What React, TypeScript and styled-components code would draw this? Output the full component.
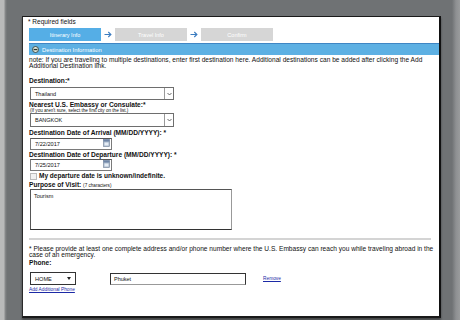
import React from 'react';
import styled, { createGlobalStyle } from 'styled-components';

const Global = createGlobalStyle`
  html, body { margin: 0; padding: 0; background: #6f7274; }
  body { font-family: "Liberation Sans", Arial, sans-serif; color: #111; }
`;

const Screen = styled.div`
  width: 460px;
  height: 320px;
  box-sizing: border-box;
  overflow: hidden;
  padding: 16px 0 0 22px;
  background: linear-gradient(
    to right,
    #b9baba 0,
    #b9baba 4px,
    #8a8c8d 5px,
    #6f7274 7px,
    #6f7274 452px,
    #8e9092 456px,
    #9a9c9d 460px
  );
`;

const Panel = styled.div`
  width: 419px;
  height: 302px;
  box-sizing: border-box;
  background: #fff;
  border-top: 1px solid #1a1a1a;
  border-left: 1px solid #2a2a2a;
  border-right: 2px solid #111;
  border-bottom: 2px solid #1a1a1a;
  padding: 0 0 0 6px;
  display: flex;
  flex-direction: column;
  box-shadow: 0 2px 2px rgba(0, 0, 0, 0.4);
`;

const Required = styled.div`
  font-size: 6.5px;
  line-height: 9px;
  height: 9px;
  margin-left: -1px;
`;

const Steps = styled.div`
  display: flex;
  align-items: center;
  margin-top: 2px;
  height: 13px;
`;

const Step = styled.div<{ $active?: boolean }>`
  width: 72px;
  height: 13px;
  display: flex;
  align-items: center;
  justify-content: center;
  background: ${(p) => (p.$active ? '#55aee6' : '#d6d6d6')};
  color: #fff;
  font-size: 5.5px;
`;

const ArrowBox = styled.div`
  width: 14px;
  display: flex;
  align-items: center;
  justify-content: center;
`;

const SectionBar = styled.div`
  margin-top: 2px;
  height: 12px;
  box-sizing: border-box;
  background: #5db0e3;
  border-top: 1px solid #3f86c4;
  display: flex;
  align-items: center;
  gap: 3px;
  padding-left: 3px;
  color: #fff;
  font-size: 5.8px;
`;

const Note = styled.div<{ $mt?: number; $size?: number; $pr?: number }>`
  margin-top: ${(p) => p.$mt ?? 0}px;
  font-size: ${(p) => p.$size ?? 6}px;
  line-height: 5.5px;
  padding-right: ${(p) => p.$pr ?? 0}px;
`;

const Label = styled.div<{ $mt?: number; $lh?: number }>`
  margin-top: ${(p) => p.$mt ?? 0}px;
  font-size: 6.6px;
  font-weight: bold;
  line-height: ${(p) => p.$lh ?? 8}px;
  height: ${(p) => p.$lh ?? 8}px;
  white-space: nowrap;
`;

const Small = styled.span`
  font-size: 4.6px;
  font-weight: normal;
`;

const Hint = styled.div`
  font-size: 4.6px;
  line-height: 5px;
  height: 5px;
  padding-left: 1px;
`;

const Select = styled.div<{ $mt?: number; $h: number }>`
  margin-top: ${(p) => p.$mt ?? 0}px;
  margin-left: 1px;
  width: 144px;
  height: ${(p) => p.$h}px;
  box-sizing: border-box;
  border: 1px solid #6e6e6e;
  display: flex;
  align-items: center;
  font-size: 5.5px;
`;

const SelectText = styled.div`
  flex: 1;
  padding-left: 4px;
`;

const SelectButton = styled.div`
  width: 8px;
  height: 100%;
  border-left: 1px solid #9a9a9a;
  display: flex;
  align-items: center;
  justify-content: center;
`;

const DateInput = styled.div<{ $mt?: number }>`
  margin-top: ${(p) => p.$mt ?? 0}px;
  margin-left: 1px;
  width: 82px;
  height: 12px;
  box-sizing: border-box;
  border: 1px solid #7a7a7a;
  border-top-color: #555;
  display: flex;
  align-items: center;
  justify-content: space-between;
  padding: 0 1px 0 4px;
  font-size: 5.6px;
`;

const CheckRow = styled.div`
  margin-top: 1px;
  height: 8px;
  display: flex;
  align-items: center;
  gap: 2px;
  font-size: 6.5px;
  font-weight: bold;
  line-height: 8px;
  padding-left: 1px;
`;

const Check = styled.div`
  width: 5px;
  height: 5px;
  border: 1px solid #bbb;
  background: #f2f2f2;
`;

const TextArea = styled.div`
  margin-left: 1px;
  width: 202px;
  height: 41px;
  box-sizing: border-box;
  border: 1px solid #555;
  border-right-color: #999;
  border-bottom-color: #333;
  padding: 3px 3px;
  font-size: 5.5px;
`;

const Divider = styled.div`
  margin-top: 8px;
  height: 2px;
  background: #d4d4d4;
  margin-right: 8px;
`;

const PhoneRow = styled.div`
  margin-top: 5.5px;
  height: 13px;
  display: flex;
  align-items: center;
  padding-left: 1px;
`;

const SmallSelect = styled.div`
  width: 46px;
  height: 13px;
  box-sizing: border-box;
  border: 1px solid #333;
  display: flex;
  align-items: center;
  justify-content: space-between;
  padding: 0 4px;
  font-size: 5.6px;
`;

const TextInput = styled.div`
  margin-left: 34px;
  width: 136px;
  height: 12px;
  box-sizing: border-box;
  border: 1px solid #333;
  border-bottom-color: #999;
  display: flex;
  align-items: center;
  padding-left: 3px;
  font-size: 5.5px;
`;

const Link = styled.a<{ $ml?: number; $mt?: number }>`
  margin-left: ${(p) => p.$ml ?? 0}px;
  margin-top: ${(p) => p.$mt ?? 0}px;
  color: #1c2aa6;
  text-decoration: underline;
  font-size: 4.8px;
  line-height: 6px;
  cursor: pointer;
`;

const Arrow = () => (
  <svg width="8" height="7" viewBox="0 0 8 7">
    <path d="M0.5 3.5H6.8M4.3 1L6.9 3.5L4.3 6" stroke="#3b7cc0" strokeWidth="1.1" fill="none" />
  </svg>
);

const MinusCircle = () => (
  <svg width="7" height="7" viewBox="0 0 7 7">
    <circle cx="3.5" cy="3.5" r="3" fill="#dfe9df" stroke="#2a332a" strokeWidth="0.8" />
    <rect x="1.6" y="2.9" width="3.8" height="1.3" fill="#2a332a" />
  </svg>
);

const Chevron = () => (
  <svg width="5" height="4" viewBox="0 0 5 4">
    <path d="M0.5 1L2.5 3L4.5 1" stroke="#444" strokeWidth="0.8" fill="none" />
  </svg>
);

const Calendar = () => (
  <svg width="7" height="8" viewBox="0 0 7 8" style={{ alignSelf: 'flex-start' }}>
    <rect x="0.5" y="0.5" width="6" height="7" fill="#a9b9cc" stroke="#6f7f96" strokeWidth="0.6" />
    <rect x="0.5" y="0.5" width="6" height="2" fill="#6f86a8" />
    <rect x="1.5" y="3.5" width="4" height="3" fill="#e6edf5" />
  </svg>
);

const Caret = () => (
  <svg width="4" height="3" viewBox="0 0 4 3">
    <path d="M0 0H4L2 3Z" fill="#222" />
  </svg>
);

export default function App() {
  return (
    <>
      <Global />
      <Screen>
        <Panel>
          <Required>* Required fields</Required>
          <Steps>
            <Step $active>Itinerary Info</Step>
            <ArrowBox>
              <Arrow />
            </ArrowBox>
            <Step>Travel Info</Step>
            <ArrowBox>
              <Arrow />
            </ArrowBox>
            <Step>Confirm</Step>
          </Steps>
          <SectionBar>
            <MinusCircle />
            <span>Destination Information</span>
          </SectionBar>
          <Note $mt={2} $size={6.6} $pr={12}>
            note: If you are traveling to multiple destinations, enter first destination here. Additional destinations can be added after clicking the Add Additional Destination link.
          </Note>

          <Label $mt={9}>Destination:*</Label>
          <Select $mt={2} $h={13}>
            <SelectText>Thailand</SelectText>
            <SelectButton>
              <Chevron />
            </SelectButton>
          </Select>

          <Label $mt={1} $lh={7}>Nearest U.S. Embassy or Consulate:*</Label>
          <Hint>(If you aren't sure, select the first city on the list.)</Hint>
          <Select $h={14}>
            <SelectText>BANGKOK</SelectText>
            <SelectButton>
              <Chevron />
            </SelectButton>
          </Select>

          <Label $mt={2}>Destination Date of Arrival (MM/DD/YYYY): *</Label>
          <DateInput $mt={1}>
            <span>7/22/2017</span>
            <Calendar />
          </DateInput>

          <Label $mt={1}>Destination Date of Departure (MM/DD/YYYY): *</Label>
          <DateInput>
            <span>7/25/2017</span>
            <Calendar />
          </DateInput>

          <CheckRow>
            <Check />
            <span>My departure date is unknown/indefinite.</span>
          </CheckRow>

          <Label $mt={1}>
            Purpose of Visit: <Small>(7 characters)</Small>
          </Label>
          <TextArea>Tourism</TextArea>

          <Divider />

          <Note $mt={6} $size={6.6} $pr={0}>
            * Please provide at least one complete address and/or phone number where the U.S. Embassy can reach you while traveling abroad in the case of an emergency.
          </Note>
          <Label $mt={1.5}>Phone:</Label>
          <PhoneRow>
            <SmallSelect>
              <span>HOME</span>
              <Caret />
            </SmallSelect>
            <TextInput>Phuket</TextInput>
            <Link $ml={17}>Remove</Link>
          </PhoneRow>
          <Link $mt={2}>Add Additional Phone</Link>
        </Panel>
      </Screen>
    </>
  );
}
